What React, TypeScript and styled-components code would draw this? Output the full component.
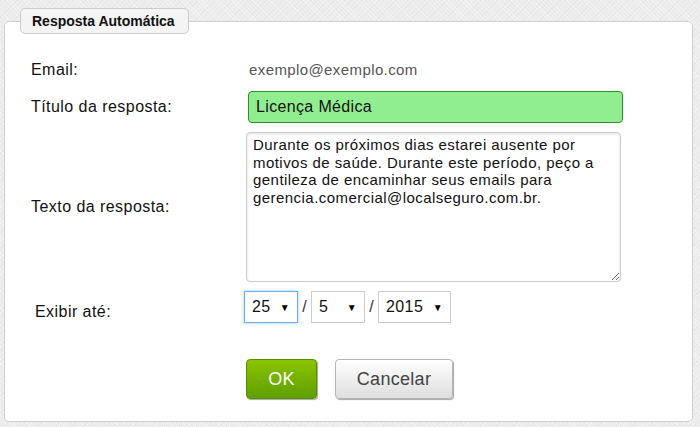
import React from "react";
import styled, { createGlobalStyle } from "styled-components";

const Global = createGlobalStyle`
  html, body { margin: 0; padding: 0; }
  body {
    font-family: "Liberation Sans", Arial, sans-serif;
    background-color: #ececec;
    background-image:
      repeating-linear-gradient(45deg, rgba(255,255,255,0.35) 0 1px, transparent 1px 3px),
      repeating-linear-gradient(-45deg, rgba(0,0,0,0.025) 0 1px, transparent 1px 4px);
    width: 700px;
    height: 427px;
    overflow: hidden;
  }
`;

const Page = styled.div`
  padding: 8px 7px 0 4px;
`;

const Panel = styled.fieldset`
  margin: 0;
  border: 1px solid #cfcfcf;
  border-radius: 5px;
  background: #fff;
  padding: 0 0 20px 26px;
  height: 414px;
  box-sizing: border-box;
  min-width: 0;
`;

const Legend = styled.legend`
  margin-left: -11px;
  padding: 0 13px 0 11px;
  height: 26px;
  box-sizing: border-box;
  line-height: 24px;
  background: #f4f4f4;
  border: 1px solid #cccccc;
  border-radius: 5px;
  font-size: 14px;
  font-weight: bold;
  color: #111;
`;

const Form = styled.div`
  display: grid;
  grid-template-columns: 215px 1fr;
  row-gap: 9px;
  margin-top: 24px;
`;

const Label = styled.div<{ $indent?: number; $shift?: number }>`
  font-size: 16px;
  letter-spacing: 0.45px;
  color: #111;
  display: flex;
  align-items: center;
  padding-left: ${(p) => p.$indent ?? 0}px;
  padding-top: ${(p) => p.$shift ?? 0}px;
`;

const Field = styled.div<{ $indent?: number }>`
  display: flex;
  align-items: center;
  margin-left: ${(p) => p.$indent ?? 0}px;
`;

const EmailValue = styled.span`
  font-size: 15px;
  letter-spacing: 0.4px;
  line-height: 24px;
  color: #555;
`;

const TitleInput = styled.input`
  width: 375px;
  height: 32px;
  box-sizing: border-box;
  background: #90ee90;
  border: 1px solid #2e8b2e;
  border-radius: 4px;
  padding: 0 7px;
  font-family: "Liberation Sans", Arial, sans-serif;
  font-size: 16px;
  letter-spacing: 0.35px;
  color: #111;
  outline: none;
`;

const TextArea = styled.textarea`
  width: 375px;
  height: 150px;
  box-sizing: border-box;
  border: 1px solid #cccccc;
  border-radius: 4px;
  box-shadow: inset 0 1px 3px rgba(0, 0, 0, 0.12);
  padding: 3px 6px;
  font-family: "Liberation Sans", Arial, sans-serif;
  font-size: 15px;
  letter-spacing: 0.45px;
  line-height: 17.5px;
  color: #111;
  outline: none;
  resize: both;
`;

const DateRow = styled.div`
  display: flex;
  align-items: center;
`;

const SelectBox = styled.div<{ $w: number; $focus?: boolean }>`
  width: ${(p) => p.$w}px;
  height: 32px;
  box-sizing: border-box;
  border: 1px solid ${(p) => (p.$focus ? "#6aaef0" : "#cccccc")};
  box-shadow: ${(p) => (p.$focus ? "0 0 3px rgba(90,160,240,0.6)" : "none")};
  display: flex;
  align-items: center;
  justify-content: space-between;
  padding: 0 7px 0 7px;
  font-size: 16px;
  letter-spacing: 0.4px;
  color: #111;
  background: #fff;
`;

const Arrow = styled.span`
  font-size: 10px;
  color: #000;
`;

const Slash = styled.span`
  font-size: 16px;
  color: #333;
  width: 13px;
  text-align: center;
`;

const Buttons = styled.div`
  display: flex;
  gap: 18px;
  margin-top: 36px;
  padding-left: 215px;
`;

const Button = styled.button<{ $primary?: boolean; $w: number }>`
  width: ${(p) => p.$w}px;
  height: 40px;
  box-sizing: border-box;
  border-radius: 4px;
  font-family: "Liberation Sans", Arial, sans-serif;
  font-size: 18px;
  letter-spacing: 0.3px;
  cursor: pointer;
  border: 1px solid ${(p) => (p.$primary ? "#5a8c00" : "#b5b5b5")};
  color: ${(p) => (p.$primary ? "#fff" : "#444")};
  background: ${(p) =>
    p.$primary
      ? "linear-gradient(#8ac400, #5f9e00)"
      : "linear-gradient(#ffffff, #dedede)"};
  box-shadow: 1px 1px 1px rgba(0, 0, 0, 0.35);
`;

const textBody =
  "Durante os próximos dias estarei ausente por motivos de saúde. Durante este período, peço a gentileza de encaminhar seus emails para gerencia.comercial@localseguro.com.br.";

export default function App() {
  return (
    <>
      <Global />
      <Page>
        <Panel>
          <Legend>Resposta Automática</Legend>
          <Form>
            <Label style={{ height: 24 }}>Email:</Label>
            <Field $indent={3}>
              <EmailValue>exemplo@exemplo.com</EmailValue>
            </Field>

            <Label>Título da resposta:</Label>
            <Field $indent={2}>
              <TitleInput readOnly defaultValue="Licença Médica" />
            </Field>

            <Label>Texto da resposta:</Label>
            <Field>
              <TextArea readOnly defaultValue={textBody} />
            </Field>

            <Label $indent={4} $shift={10}>Exibir até:</Label>
            <Field $indent={-2}>
              <DateRow>
                <SelectBox $w={54} $focus>
                  <span>25</span>
                  <Arrow>▼</Arrow>
                </SelectBox>
                <Slash>/</Slash>
                <SelectBox $w={54}>
                  <span>5</span>
                  <Arrow>▼</Arrow>
                </SelectBox>
                <Slash>/</Slash>
                <SelectBox $w={73}>
                  <span>2015</span>
                  <Arrow>▼</Arrow>
                </SelectBox>
              </DateRow>
            </Field>
          </Form>
          <Buttons>
            <Button $primary $w={71}>OK</Button>
            <Button $w={118}>Cancelar</Button>
          </Buttons>
        </Panel>
      </Page>
    </>
  );
}
